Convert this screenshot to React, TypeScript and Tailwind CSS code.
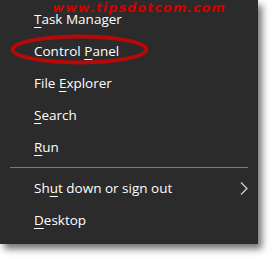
import React from "react";

const U = ({ children }: { children: React.ReactNode }) => (
  <span className="underline decoration-1 underline-offset-[3px]">{children}</span>
);

function Row({ children, chevron }: { children: React.ReactNode; chevron?: boolean }) {
  return (
    <div className="h-[32px] flex items-center justify-between pl-[34px] pr-[10px] text-[13.5px] text-white">
      <span>{children}</span>
      {chevron && (
        <svg width="8" height="13" viewBox="0 0 8 13" className="block">
          <path d="M1 0.5 L7 6.5 L1 12.5" fill="none" stroke="#cfd4e0" strokeWidth="1.2" />
        </svg>
      )}
    </div>
  );
}

export default function App() {
  return (
    <div
      className="w-[273px] h-[259px] bg-white overflow-hidden"
      style={{ fontFamily: '"Open Sans", "Noto Sans", sans-serif' }}
    >
      <div className="relative w-[258px] h-[244px] bg-[#2b2b2b] pt-[3px] shadow-[4px_5px_7px_rgba(0,0,0,0.55)]">
        <Row>
          <U>T</U>ask Manager
        </Row>
        <Row>
          Control <U>P</U>anel
        </Row>
        <Row>
          File <U>E</U>xplorer
        </Row>
        <Row>
          <U>S</U>earch
        </Row>
        <Row>
          <U>R</U>un
        </Row>
        <div className="mx-[10px] my-[4px] h-px bg-[#7a7a7a]" />
        <Row chevron>
          Sh<U>u</U>t down or sign out
        </Row>
        <Row>
          <U>D</U>esktop
        </Row>

        <svg className="absolute left-0 top-0 pointer-events-none" width="258" height="80">
          <ellipse cx="79.5" cy="49.5" rx="67" ry="13" fill="none" stroke="#b50a0a" strokeWidth="3.8" />
        </svg>
        <div
          className="absolute left-[52px] top-[0px] text-[13px] font-bold italic text-[#d00000] leading-[16px] tracking-[0.9px]"
          style={{ fontFamily: '"DejaVu Sans", Verdana, sans-serif' }}
        >
          www.tipsdotcom.com
        </div>
      </div>
    </div>
  );
}
